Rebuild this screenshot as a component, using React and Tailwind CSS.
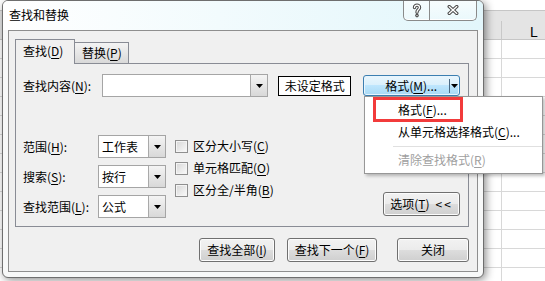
function U({ children }) {
  return <span className="underline underline-offset-[2px]">{children}</span>;
}

function Arrow() {
  return (
    <svg width="7" height="4" viewBox="0 0 7 4">
      <path d="M0 0h7L3.5 4z" fill="#000" />
    </svg>
  );
}

function DropBtn() {
  return (
    <div className="w-[17px] h-full border-l border-[#a9a9a9] bg-linear-to-b from-[#f4f4f4] to-[#d8d8d8] flex items-center justify-center">
      <Arrow />
    </div>
  );
}

function Combo({ value }) {
  return (
    <div className="w-[68px] h-[23px] border border-[#a5a5a5] bg-white flex items-center">
      <div className="flex-1 pl-[3px]">{value}</div>
      <DropBtn />
    </div>
  );
}

function Check({ children }) {
  return (
    <div className="h-[22px] flex items-center">
      <div className="w-[13px] h-[13px] border border-[#8f8f8f] bg-linear-to-br from-[#d6d6d6] to-[#fbfbfb] shadow-[inset_0_0_0_1px_#f4f4f4]" />
      <div className="ml-[5px]">{children}</div>
    </div>
  );
}

function Btn({ className, children }) {
  return (
    <div
      className={
        'h-[24px] border border-[#707070] rounded-[3px] shadow-[inset_0_0_0_1px_#fcfcfc] bg-[linear-gradient(to_bottom,#f2f2f2_0%,#ebebeb_50%,#dddddd_50%,#cfcfcf_100%)] flex items-center justify-center ' +
        className
      }
    >
      {children}
    </div>
  );
}

function HelpGlyph() {
  const d = 'M2.5 4.5C2.5 1.3 7.5 1.3 7.5 4.5C7.5 6.7 5 6.5 5 9.2';
  return (
    <svg width="10" height="15" viewBox="0 0 10 15">
      <path d={d} fill="none" stroke="#4d4d4d" strokeWidth="3.4" strokeLinecap="round" />
      <circle cx="5" cy="12.6" r="1.8" fill="#4d4d4d" />
      <path d={d} fill="none" stroke="#fff" strokeWidth="1.3" strokeLinecap="round" />
      <circle cx="5" cy="12.6" r="0.7" fill="#fff" />
    </svg>
  );
}

function CloseGlyph() {
  const d = 'M2.2 1.6L9.8 8.4M9.8 1.6L2.2 8.4';
  return (
    <svg width="12" height="10" viewBox="0 0 12 10">
      <path d={d} stroke="#4d4d4d" strokeWidth="3.4" strokeLinecap="round" />
      <path d={d} stroke="#fff" strokeWidth="1.3" strokeLinecap="round" />
    </svg>
  );
}

export default function App() {
  const rows = Array.from({ length: 13 });

  return (
    <div className="relative w-[545px] h-[281px] overflow-hidden bg-white text-[12px] leading-[16px] text-black font-['Noto_Sans_CJK_SC','Liberation_Sans',sans-serif]">
      {/* spreadsheet behind the dialog */}
      <div className="h-[10px]" />
      <div className="h-[30px] bg-[#e4e4e4] border-t border-b border-[#c6c6c6] flex items-end">
        <div className="w-[502px] h-[18px] shrink-0 border-r border-[#c8c8c8]" />
        <div className="w-[64px] h-[18px] shrink-0 flex items-end justify-center font-['Liberation_Sans',sans-serif] text-[14px] leading-[14px]">
          L
        </div>
      </div>
      {rows.map((_, i) => (
        <div key={i} className="h-[19px] flex border-b border-[#d8d8d8]">
          <div className="w-[502px] shrink-0 border-r border-[#d8d8d8]" />
          <div className="flex-1" />
        </div>
      ))}

      {/* dialog window */}
      <div className="absolute left-[2px] top-0 w-[482px] h-[278px] rounded-[6px] border border-[#6e6e6e] bg-[#f7f8f8] shadow-[2px_2px_9px_rgba(0,0,0,0.45)] flex flex-col overflow-hidden">
        <div className="h-[29px] shrink-0 flex justify-between bg-[linear-gradient(to_right,#ffffff_0%,#f2fbfd_45%,#e2f6fb_100%)]">
          <div className="pl-[6px] pt-[6px]">查找和替换</div>
          <div className="-mt-[1px] mr-[6px] w-[74px] h-[21px] flex border border-t-0 border-[#8a8a8a] rounded-b-[5px] overflow-hidden bg-[linear-gradient(to_bottom,rgba(255,255,255,0.7),rgba(255,255,255,0.25))] shadow-[inset_0_-1px_0_#ffffff]">
            <div className="w-[26px] border-r border-[#8a8a8a] flex justify-center pt-[3px]">
              <HelpGlyph />
            </div>
            <div className="flex-1 flex justify-center pt-[5px]">
              <CloseGlyph />
            </div>
          </div>
        </div>

        <div className="mx-[5px] mb-[5px] flex-1 border border-[#8e8e8e] bg-[#f0f0f0] pl-[6px] pr-[8px] pt-[8px] pb-[9px] flex flex-col">
          {/* tabs */}
          <div className="flex items-end h-[24px]">
            <div className="relative z-10 -mb-[1px] h-[25px] w-[60px] border border-b-0 border-[#898c95] bg-[#f0f0f0] pl-[7px] pt-[3px]">
              查找(<U>D</U>)
            </div>
            <div className="h-[21px] w-[54px] border border-b-0 border-l-0 border-[#898c95] bg-linear-to-b from-[#f4f4f4] to-[#d9d9d9] pl-[7px] pt-[2px]">
              替换(<U>P</U>)
            </div>
          </div>

          {/* tab panel */}
          <div className="h-[164px] border border-[#898c95] bg-[#f0f0f0] pt-[10px] pl-[7px] pr-[8px] pb-[8px] flex flex-col">
            <div className="flex items-center h-[23px]">
              <div className="w-[79px]">
                查找内容(<U>N</U>):
              </div>
              <div className="w-[167px] h-[23px] border border-[#a5a5a5] bg-white flex justify-end">
                <DropBtn />
              </div>
              <div className="ml-[10px] w-[73px] h-[20px] border border-black bg-white flex items-center justify-center">
                未设定格式
              </div>
              <div className="ml-[12px] w-[97px] h-[21px] rounded-[3px] border border-[#3c7fb1] shadow-[inset_0_0_0_1px_#e8f5fd] bg-[linear-gradient(to_bottom,#eaf6fd_0%,#d9f0fc_50%,#bee6fd_50%,#a7d9f5_100%)] flex items-center">
                <div className="w-[85px] pl-[21px]">
                  格式(<U>M</U>)...
                </div>
                <div className="w-px h-[14px] bg-[#4a6a84]" />
                <div className="flex-1 flex justify-center">
                  <Arrow />
                </div>
              </div>
            </div>

            <div className="mt-[38px] flex">
              <div className="flex flex-col gap-[7px]">
                <div className="flex items-center">
                  <div className="w-[75px]">
                    范围(<U>H</U>):
                  </div>
                  <Combo value="工作表" />
                </div>
                <div className="flex items-center">
                  <div className="w-[75px]">
                    搜索(<U>S</U>):
                  </div>
                  <Combo value="按行" />
                </div>
                <div className="flex items-center">
                  <div className="w-[75px]">
                    查找范围(<U>L</U>):
                  </div>
                  <Combo value="公式" />
                </div>
              </div>

              <div className="ml-[9px] flex flex-col">
                <Check>
                  区分大小写(<U>C</U>)
                </Check>
                <Check>
                  单元格匹配(<U>O</U>)
                </Check>
                <Check>
                  区分全/半角(<U>B</U>)
                </Check>
              </div>

              <div className="flex-1 flex justify-end items-end pb-[2px]">
                <Btn className="w-[77px]">
                  选项(<U>T</U>)<span className="ml-[6px] tracking-[2px]">&lt;&lt;</span>
                </Btn>
              </div>
            </div>
          </div>

          {/* bottom buttons */}
          <div className="mt-[11px] flex justify-end">
            <Btn className="w-[76px]">
              查找全部(<U>I</U>)
            </Btn>
            <Btn className="w-[90px] ml-[12px]">
              查找下一个(<U>F</U>)
            </Btn>
            <Btn className="w-[72px] ml-[20px]">关闭</Btn>
          </div>
        </div>
      </div>

      {/* dropdown menu of the 格式 button */}
      <div className="absolute left-[364px] top-[96px] w-[179px] border border-[#979797] bg-white shadow-[2px_2px_3px_rgba(0,0,0,0.25)] pt-[2px] pb-[2px]">
        <div className="h-[22px] flex items-center pl-[33px]">
          格式(<U>F</U>)...
        </div>
        <div className="h-[22px] flex items-center pl-[33px]">
          从单元格选择格式(<U>C</U>)...
        </div>
        <div className="mt-[3px] mb-[2px] ml-[28px] h-px bg-[#e0e0e0]" />
        <div className="h-[22px] flex items-center pl-[33px] text-[#a0a0a0]">
          清除查找格式(<U>R</U>)
        </div>
        <div className="absolute left-[8px] top-0 w-[90px] h-[25px] border-[3px] border-[#f23b3b]" />
      </div>
    </div>
  );
}
